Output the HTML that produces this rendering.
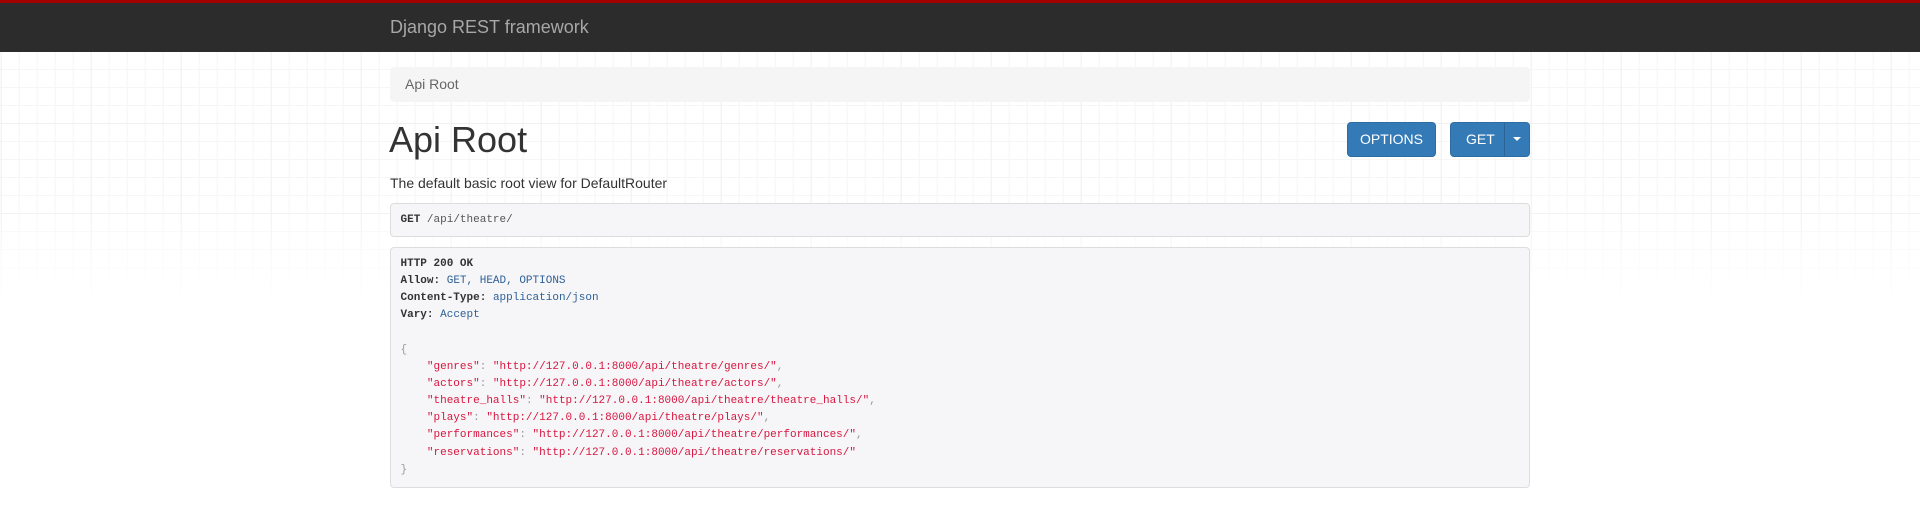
<!DOCTYPE html>
<html><head><meta charset="utf-8"><style>
html,body{margin:0;padding:0;background:#fff;width:1920px;height:505px;overflow:hidden}
body{font-family:"Liberation Sans",Arial,sans-serif;font-size:14px;color:#333;position:relative}
.grid{position:absolute;left:0;top:52px;width:1920px;height:250px;
background-image:linear-gradient(to right,#f0f0f0 1px,transparent 1px),linear-gradient(to bottom,#f0f0f0 1px,transparent 1px),linear-gradient(to right,#f6f6f6 1px,transparent 1px),linear-gradient(to bottom,#f6f6f6 1px,transparent 1px);
background-size:90px 90px,90px 90px,18px 18px,18px 18px;background-position:0.7px 71px,0.7px 71px,0.7px 17px,0.7px 17px;
-webkit-mask-image:linear-gradient(to bottom,#000 60%,transparent 100%);mask-image:linear-gradient(to bottom,#000 60%,transparent 100%)}
.nav{position:absolute;left:0;top:0;width:1920px;height:49px;border-top:3px solid #a30000;background:#2c2c2c}
.brand{position:absolute;left:390px;top:14px;font-size:18px;color:#a7a7a7}
.c{position:absolute;left:390px;width:1140px}
.bc{top:67px;height:35px;background:#f5f5f5;border-radius:4px;box-sizing:border-box;padding:9px 15px;color:#666;font-size:14px}
h1{position:absolute;left:389px;top:120px;margin:0;font-size:36px;font-weight:400;line-height:40px;color:#333}
.btn{position:absolute;top:122px;height:35px;background:#337ab7;border:1px solid #2e6da4;border-radius:4px;box-sizing:border-box;color:#fff;font-size:14px;line-height:33px;text-align:center}
.desc{top:173px;font-size:14px;line-height:20px}
pre{margin:0;position:absolute;left:390px;width:1140px;box-sizing:border-box;background:#f6f6f8;border:1px solid #ddd;border-radius:4px;padding:8px 9.5px;font-family:"Liberation Mono",monospace;font-size:11px;line-height:17.14px;color:#333}
b{font-weight:bold}
.s{color:#d8153f}.v{color:#2e5f96}.p{color:#999}.g{color:#555}
</style></head><body>
<div class="grid"></div>
<div class="nav"><div class="brand">Django REST framework</div></div>
<div class="c bc">Api Root</div>
<h1>Api Root</h1>
<div class="btn" style="left:1347px;width:89px">OPTIONS</div>
<div class="btn" style="left:1450px;width:80px;text-align:left;padding-left:15px">GET<span style="position:absolute;left:53px;top:0;bottom:0;border-left:1px solid #2a6396"></span><span style="position:absolute;left:62px;top:14px;width:0;height:0;border-left:4px solid transparent;border-right:4px solid transparent;border-top:4px solid #fff"></span></div>
<div class="c desc">The default basic root view for DefaultRouter</div>
<pre style="top:203px;height:34px"><b>GET</b> <span class="g">/api/theatre/</span></pre>
<pre style="top:247px;height:241px"><b>HTTP 200 OK</b>
<b>Allow:</b> <span class="v">GET, HEAD, OPTIONS</span>
<b>Content-Type:</b> <span class="v">application/json</span>
<b>Vary:</b> <span class="v">Accept</span>

<span class="p">{</span>
    <span class="s">"genres"</span><span class="p">: </span><span class="s">"http://127.0.0.1:8000/api/theatre/genres/"</span><span class="p">,</span>
    <span class="s">"actors"</span><span class="p">: </span><span class="s">"http://127.0.0.1:8000/api/theatre/actors/"</span><span class="p">,</span>
    <span class="s">"theatre_halls"</span><span class="p">: </span><span class="s">"http://127.0.0.1:8000/api/theatre/theatre_halls/"</span><span class="p">,</span>
    <span class="s">"plays"</span><span class="p">: </span><span class="s">"http://127.0.0.1:8000/api/theatre/plays/"</span><span class="p">,</span>
    <span class="s">"performances"</span><span class="p">: </span><span class="s">"http://127.0.0.1:8000/api/theatre/performances/"</span><span class="p">,</span>
    <span class="s">"reservations"</span><span class="p">: </span><span class="s">"http://127.0.0.1:8000/api/theatre/reservations/"</span>
<span class="p">}</span></pre>
</body></html>
